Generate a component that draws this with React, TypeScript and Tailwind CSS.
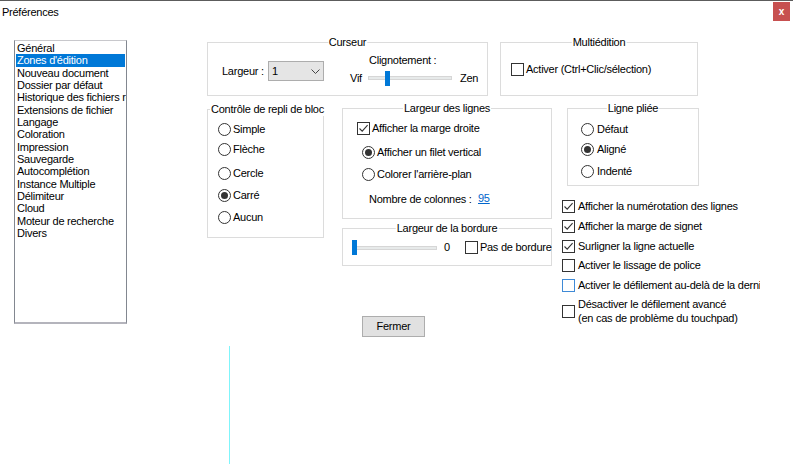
import React from "react";

function Check({ checked = false, blue = false }: { checked?: boolean; blue?: boolean }) {
  return (
    <span
      className={`w-[13px] h-[13px] border ${blue ? "border-[#3f8ad6]" : "border-[#333333]"} bg-white flex items-center justify-center shrink-0`}
    >
      {checked && (
        <svg width="11" height="11" viewBox="0 0 11 11">
          <path d="M1.5 5.5 L4.2 8.2 L9.6 2.2" stroke="#333" fill="none" strokeWidth="1.1" />
        </svg>
      )}
    </span>
  );
}

function Radio({ checked = false }: { checked?: boolean }) {
  return (
    <span className="w-[13px] h-[13px] rounded-full border border-[#333333] bg-white flex items-center justify-center shrink-0">
      {checked && <span className="w-[7px] h-[7px] rounded-full bg-[#333333]" />}
    </span>
  );
}

function Group({
  title,
  className,
  left = false,
  children,
}: {
  title: string;
  className: string;
  left?: boolean;
  children?: React.ReactNode;
}) {
  return (
    <div className={`relative border border-[#dcdcdc] ${className}`}>
      <span
        className={`absolute -top-[7px] bg-white px-[1px] leading-[13px] whitespace-nowrap ${
          left ? "left-[2px]" : "left-1/2 -translate-x-1/2"
        }`}
      >
        {title}
      </span>
      {children}
    </div>
  );
}

function Slider({ width, pos }: { width: number; pos: number }) {
  return (
    <div className="relative h-[15px] flex items-center shrink-0" style={{ width }}>
      <div className="h-[4px] w-full bg-[#e7eaea] border border-[#d6d6d6]" />
      <div className="absolute top-0 w-[5px] h-[15px] bg-[#0078d7]" style={{ left: pos }} />
    </div>
  );
}

const items = [
  "Général",
  "Zones d'édition",
  "Nouveau document",
  "Dossier par défaut",
  "Historique des fichiers récents",
  "Extensions de fichier",
  "Langage",
  "Coloration",
  "Impression",
  "Sauvegarde",
  "Autocomplétion",
  "Instance Multiple",
  "Délimiteur",
  "Cloud",
  "Moteur de recherche",
  "Divers",
];

export default function App() {
  return (
    <div className="w-[793px] h-[464px] bg-white border-t border-[#5c5c5c] flex flex-col overflow-hidden font-['Liberation_Sans',Arial,sans-serif] text-[11px] tracking-[-0.25px] text-black">
      {/* title bar */}
      <div className="h-[23px] flex items-start justify-between shrink-0">
        <span className="pl-[2px] mt-[4px] leading-[14px]">Préférences</span>
        <div className="mr-[3px] mt-[1px] w-[17px] h-[19px] bg-[#c75050] flex items-center justify-center text-white text-[10px] font-bold leading-none">
          x
        </div>
      </div>

      {/* body */}
      <div className="flex h-[284px] shrink-0">
        {/* list */}
        <div className="ml-[14px] mt-[16px] w-[113px] h-[284px] border border-[#828790] border-b-2 border-b-[#b4b4bc] border-t-[#c8c8cc] p-[1px] overflow-hidden">
          {items.map((t, i) => (
            <div
              key={t}
              className={`leading-[12.33px] h-[12.33px] pl-[1px] whitespace-nowrap ${
                i === 1 ? "bg-[#0078d7] text-white" : ""
              }`}
            >
              {t}
            </div>
          ))}
        </div>

        {/* right */}
        <div className="ml-[80px] mt-[18px] flex flex-col">
          <div className="flex">
            <Group title="Curseur" className="w-[281px] h-[54px] flex">
              <div className="pl-[14px] pt-[18px] flex items-start">
                <span className="w-[46px] h-[20px] flex items-center">Largeur :</span>
                <div className="w-[56px] h-[20px] bg-[#e5e5e5] border border-[#adadad] flex items-center justify-between">
                  <span className="pl-[3px]">1</span>
                  <svg width="9" height="5" viewBox="0 0 9 5" className="mr-[3px]">
                    <path d="M0.5 0.5 L4.5 4.5 L8.5 0.5" stroke="#444" fill="none" strokeWidth="1" />
                  </svg>
                </div>
              </div>
              <div className="ml-[26px] pt-[10px] flex flex-col">
                <span className="ml-[19px] h-[14px] leading-[14px]">Clignotement :</span>
                <div className="mt-[3px] flex items-center h-[16px]">
                  <span className="w-[18px]">Vif</span>
                  <Slider width={84} pos={17} />
                  <span className="ml-[8px]">Zen</span>
                </div>
              </div>
            </Group>
            <Group title="Multiédition" className="ml-[12px] w-[198px] h-[54px]">
              <div className="pl-[10px] pt-[18px] flex items-center gap-[2px]">
                <Check />
                <span>Activer (Ctrl+Clic/sélection)</span>
              </div>
            </Group>
          </div>

          <div className="flex mt-[12px] items-start">
            <Group title="Contrôle de repli de bloc" left className="mt-[1px] w-[117px] h-[129px] flex flex-col">
              <div className="pl-[10px] pt-[12px] flex flex-col">
                <div className="h-[14px] flex items-center gap-[2px]"><Radio /><span>Simple</span></div>
                <div className="mt-[6px] h-[14px] flex items-center gap-[2px]"><Radio /><span>Flèche</span></div>
                <div className="mt-[10px] h-[14px] flex items-center gap-[2px]"><Radio /><span>Cercle</span></div>
                <div className="mt-[8px] h-[14px] flex items-center gap-[2px]"><Radio checked /><span>Carré</span></div>
                <div className="mt-[8px] h-[14px] flex items-center gap-[2px]"><Radio /><span>Aucun</span></div>
              </div>
            </Group>

            <div className="ml-[18px] flex flex-col w-[210px]">
              <Group title="Largeur des lignes" className="h-[111px]">
                <div className="pt-[12px] flex flex-col">
                  <div className="pl-[14px] h-[14px] flex items-center gap-[2px]"><Check checked /><span>Afficher la marge droite</span></div>
                  <div className="pl-[19px] mt-[10px] h-[14px] flex items-center gap-[2px]"><Radio checked /><span>Afficher un filet vertical</span></div>
                  <div className="pl-[19px] mt-[8px] h-[14px] flex items-center gap-[2px]"><Radio /><span>Colorer l'arrière-plan</span></div>
                  <div className="pl-[26px] mt-[11px] h-[14px] flex items-center">
                    <span className="w-[109px]">Nombre de colonnes :</span>
                    <span className="text-[#0066cc] underline -mt-[2px]">95</span>
                  </div>
                </div>
              </Group>
              <Group title="Largeur de la bordure" className="mt-[9px] h-[38px]">
                <div className="pl-[9px] pt-[11px] flex items-center h-[26px]">
                  <Slider width={85} pos={0} />
                  <span className="ml-[7px]">0</span>
                  <span className="ml-[15px]"><Check /></span>
                  <span className="ml-[2px] whitespace-nowrap">Pas de bordure</span>
                </div>
              </Group>
            </div>

            <div className="ml-[10px] flex flex-col w-[198px]">
              <Group title="Ligne pliée" className="ml-[5px] w-[132px] h-[78px]">
                <div className="pl-[13px] pt-[13px] flex flex-col">
                  <div className="h-[14px] flex items-center gap-[3px]"><Radio /><span>Défaut</span></div>
                  <div className="mt-[6px] h-[14px] flex items-center gap-[3px]"><Radio checked /><span>Aligné</span></div>
                  <div className="mt-[8px] h-[14px] flex items-center gap-[3px]"><Radio /><span>Indenté</span></div>
                </div>
              </Group>
              <div className="mt-[13px] flex flex-col whitespace-nowrap w-[198px] overflow-hidden">
                <div className="h-[14px] flex items-center gap-[3px]"><Check checked /><span>Afficher la numérotation des lignes</span></div>
                <div className="mt-[6px] h-[14px] flex items-center gap-[3px]"><Check checked /><span>Afficher la marge de signet</span></div>
                <div className="mt-[6px] h-[14px] flex items-center gap-[3px]"><Check checked /><span>Surligner la ligne actuelle</span></div>
                <div className="mt-[5px] h-[14px] flex items-center gap-[3px]"><Check /><span>Activer le lissage de police</span></div>
                <div className="mt-[6px] h-[14px] flex items-center gap-[3px]"><Check blue /><span>Activer le défilement au-delà de la dernière ligne</span></div>
                <div className="mt-[5px] flex items-center gap-[3px]">
                  <Check />
                  <span className="leading-[14px]">
                    Désactiver le défilement avancé
                    <br />
                    (en cas de problème du touchpad)
                  </span>
                </div>
              </div>
            </div>
          </div>
        </div>
      </div>

      {/* button */}
      <div className="mt-[8px] ml-[362px] w-[63px] h-[21px] bg-[#e1e1e1] border border-[#adadad] flex items-center justify-center shrink-0">
        Fermer
      </div>

      <div className="mt-[9px] ml-[229px] w-px flex-1 bg-[#7ff5fb]" />
    </div>
  );
}
